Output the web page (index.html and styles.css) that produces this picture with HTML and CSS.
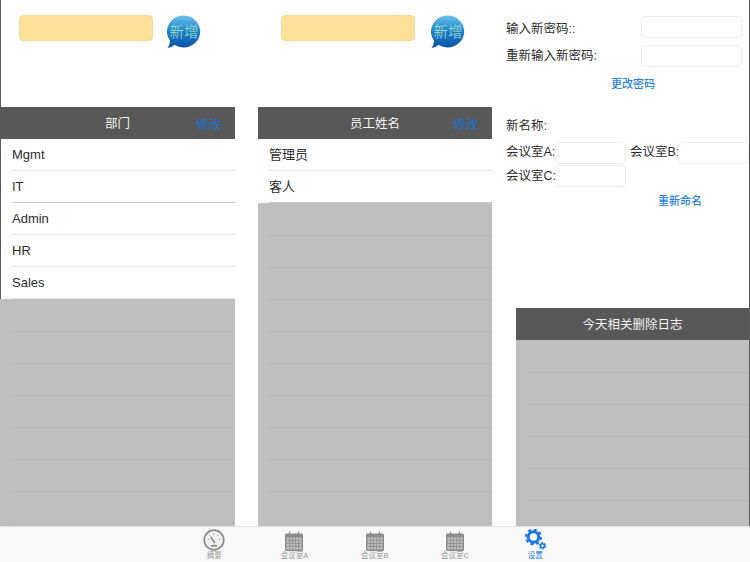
FILE: index.html
```html
<!DOCTYPE html>
<html lang="zh">
<head>
<meta charset="utf-8">
<title>设置</title>
<link rel="stylesheet" href="styles.css">
</head>
<body>
<div class="app">
  <main class="columns">
    <section class="col col-dept">
      <div class="add-area">
        <input class="add-input" type="text">
        <svg class="bubble" viewBox="0 0 34 34" width="34" height="34">
          <defs>
            <linearGradient id="bb" x1="0" y1="0" x2="0" y2="1">
              <stop offset="0" stop-color="#6fc0ec"/><stop offset=".45" stop-color="#1b86d2"/><stop offset="1" stop-color="#0a4fa6"/>
            </linearGradient>
          </defs>
          <path d="M17 .5a16.500 16 0 1 1-9.500 29.300Q5 32.500.5 33 3 30 3 25.500A16.500 16 0 0 1 17 .5z" fill="url(#bb)"/>
          <text x="17" y="21.500" class="bubble-text">新增</text>
        </svg>
      </div>
      <div class="head"><span class="head-title">部门</span><span class="head-action">修改</span></div>
      <div class="row">Mgmt</div>
      <div class="row">IT</div>
      <div class="row">Admin</div>
      <div class="row">HR</div>
      <div class="row">Sales</div>
      <div class="empty"><i></i><i></i><i></i><i></i><i></i><i></i><i></i></div>
    </section>

    <section class="col col-staff">
      <div class="add-area">
        <input class="add-input" type="text">
        <svg class="bubble" viewBox="0 0 34 34" width="34" height="34">
          <path d="M17 .5a16.500 16 0 1 1-9.500 29.300Q5 32.500.5 33 3 30 3 25.500A16.500 16 0 0 1 17 .5z" fill="url(#bb)"/>
          <text x="17" y="21.500" class="bubble-text">新增</text>
        </svg>
      </div>
      <div class="head"><span class="head-title">员工姓名</span><span class="head-action">修改</span></div>
      <div class="row row-cjk">管理员</div>
      <div class="row row-cjk">客人</div>
      <div class="empty"><i></i><i></i><i></i><i></i><i></i><i></i><i></i><i></i><i></i><i></i></div>
    </section>

    <section class="col col-settings">
      <div class="pw-row"><label>输入新密码::</label><input class="field field-pw" type="text"></div>
      <div class="pw-row pw-row-2"><label>重新输入新密码:</label><input class="field field-pw" type="text"></div>
      <a class="link link-pw">更改密码</a>
      <div class="rename-title">新名称:</div>
      <div class="rooms">
        <label>会议室A:</label><input class="field field-room" type="text">
        <label class="room-b">会议室B:</label><input class="field field-room" type="text">
      </div>
      <div class="rooms rooms-c">
        <label>会议室C:</label><input class="field field-room" type="text">
      </div>
      <a class="link link-rename">重新命名</a>
      <div class="log">
        <div class="head"><span class="head-title">今天相关删除日志</span></div>
        <div class="empty"><i></i><i></i><i></i><i></i><i></i></div>
      </div>
    </section>
  </main>

  <nav class="tabs">
    <div class="tab">
      <svg viewBox="0 0 22 22" width="22" height="22" fill="none" stroke="#8a8a8a">
        <circle cx="11" cy="11" r="9.800" stroke-width="1.700" fill="#f1f1f1"/>
        <path d="M4.800 10.500h1.200M6.400 6.500l.8.7M10.500 4.600v1.200M15 6.200l-.8.8M17.200 10.500H16" stroke-width="1"/>
        <path d="M7.800 7.800l3.800 6.200" stroke-width="1.600"/>
        <path d="M8 16.800h6" stroke-width="1.800"/>
      </svg>
      <span>摘要</span>
    </div>
    <div class="tab">
      <svg viewBox="0 0 18 20" width="18" height="20"><use href="#cal"/></svg>
      <span>会议室A</span>
    </div>
    <div class="tab">
      <svg viewBox="0 0 18 20" width="18" height="20"><use href="#cal"/></svg>
      <span>会议室B</span>
    </div>
    <div class="tab">
      <svg viewBox="0 0 18 20" width="18" height="20"><use href="#cal"/></svg>
      <span>会议室C</span>
    </div>
    <div class="tab tab-on">
      <svg viewBox="0 0 23 22" width="23" height="22" fill="none" stroke="#1a78e0">
        <circle cx="9.500" cy="8" r="5.200" stroke-width="3"/>
        <circle cx="9.500" cy="8" r="7.300" stroke-width="2.400" stroke-dasharray="2.870 2.870"/>
        <circle cx="18.500" cy="16.800" r="2" stroke-width="1.600"/>
        <circle cx="18.500" cy="16.800" r="3.200" stroke-width="1.100" stroke-dasharray="1.680 1.680"/>
      </svg>
      <span>设置</span>
    </div>
  </nav>
</div>
<svg class="defs" width="0" height="0">
  <defs>
    <g id="cal">
      <path d="M1.500 2.500h15a1.500 1.500 0 0 1 1.500 1.500v14.500a1.500 1.500 0 0 1-1.500 1.500h-15A1.500 1.500 0 0 1 0 18.500V4a1.500 1.500 0 0 1 1.500-1.500z" fill="#8a8a8a"/>
      <path d="M4 .5h1.200v3H4zM12.800 .5H14v3h-1.200z" fill="#8a8a8a"/>
      <path d="M1.500 6.500h15v12h-15z" fill="#c4c4c4"/>
      <path d="M1.500 9.300h15M1.500 12.300h15M1.500 15.300h15M4.700 6.500v12M7.700 6.500v12M10.700 6.500v12M13.700 6.500v12" stroke="#8f8f8f" stroke-width="1" fill="none"/>
    </g>
  </defs>
</svg>
</body>
</html>
```
FILE: styles.css
```css
* { box-sizing: border-box; }
html, body { margin: 0; padding: 0; }
body {
  width: 750px;
  height: 562px;
  overflow: hidden;
  background: #fff;
  color: #2c2c2c;
  font-family: "Liberation Sans", "Noto Sans CJK SC", sans-serif;
  font-size: 12.5px;
}
.defs { position: absolute; }
.app { display: flex; flex-direction: column; height: 562px; }
.columns { display: flex; height: 526px; overflow: hidden; }
.col { display: flex; flex-direction: column; }
.col-dept { width: 235px; margin-right: 23px; }
.col-dept .add-area, .col-dept .row { border-left: 1px solid #5a5a5a; }
.col-staff { width: 234px; }
.col-settings {
  width: 258px;
  padding-top: 16px;
  padding-left: 14px;
  border-right: 1px solid #5a5a5a;
}

.add-area {
  height: 107px;
  display: flex;
  align-items: flex-start;
  padding: 15px 0 0 19px;
}
.col-dept .add-area { padding-left: 18px; }
.col-staff .add-area { padding-left: 23px; }
.add-input {
  width: 134px;
  height: 26px;
  margin: 0 14px 0 0;
  padding: 0;
  background: #fde196;
  border: 1px solid #eed9a0;
  border-radius: 4px;
}
.col-staff .add-input { margin-right: 16px; }
.bubble { flex: none; }
.bubble-text {
  font-size: 14.500px;
  fill: #b9e2ba;
  text-anchor: middle;
  font-family: "Noto Sans CJK SC", sans-serif;
  font-weight: 300;
}

.head {
  height: 32px;
  flex: none;
  background: #585858;
  color: #f4f4f4;
  display: flex;
  align-items: center;
  justify-content: center;
  position: relative;
  font-size: 12.500px;
  padding-bottom: 1px;
}
.head-action {
  position: absolute;
  right: 14px;
  top: 7px;
  color: #1c72d8;
}
.row {
  height: 32px;
  flex: none;
  padding: 0 0 1px 11px;
  display: flex;
  align-items: center;
  font-size: 13px;
  position: relative;
}
.row-cjk { padding-bottom: 4px; }
.row::after {
  content: "";
  position: absolute;
  left: 11px;
  right: 0;
  bottom: 0;
  height: 1px;
  background: #e4e4e4;
}
.row:nth-child(4)::after { background: #c8c8c8; }

.empty {
  flex: 1;
  background: #bfbfbf;
  padding-top: 1px;
  overflow: hidden;
}
.empty i {
  display: block;
  height: 32px;
  margin-left: 11px;
  border-bottom: 1px solid #b7b7b7;
}

.pw-row {
  display: flex;
  align-items: center;
  justify-content: space-between;
  height: 22px;
  padding-right: 7px;
}
.pw-row-2 { margin-top: 7px; }
.pw-row-2 label { padding-bottom: 4px; }
.field {
  height: 22px;
  margin: 0;
  padding: 0;
  background: #fff;
  border: 1px solid #ececec;
  border-radius: 4px;
  flex: none;
}
.field-pw { width: 101px; }
.field-room { width: 71px; }
.link {
  color: #2a80de;
  font-size: 11px;
  font-weight: 500;
  display: block;
}
.link-pw { margin: 10px 0 0 105px; height: 14px; line-height: 14px; }
.rename-title { margin-top: 26px; height: 18px; line-height: 18px; }
.rooms { display: flex; align-items: center; height: 22px; margin-top: 7px; white-space: nowrap; }
.rooms label { width: 49px; flex: none; padding-bottom: 5px; }
.rooms .room-b { margin-left: 4px; width: 48px; }
.rooms-c { margin-top: 1px; }
.rooms-c label { padding-bottom: 3px; }
.link-rename { margin: 7px 0 0 152px; height: 14px; line-height: 14px; }
.log {
  margin: 100px 0 0 10px;
  flex: 1;
  display: flex;
  flex-direction: column;
  min-height: 0;
}

.tabs {
  height: 36px;
  flex: none;
  display: flex;
  padding-left: 174px;
  background: #f8f8f8;
  border-top: 1px solid #e2e2e2;
}
.tab {
  width: 80.300px;
  display: flex;
  flex-direction: column;
  align-items: center;
  justify-content: flex-end;
  color: #979797;
  font-size: 7.500px;
  line-height: 9px;
  padding: 0 0 2px;
}
.tab svg { display: block; }
.tab-on { color: #1a78e0; }
```
